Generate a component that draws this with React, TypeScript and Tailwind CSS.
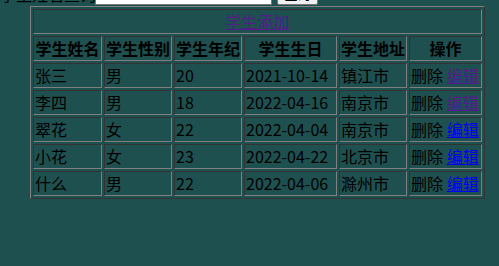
import React from "react";

interface Student {
    name: string;
    gender: string;
    age: number;
    birthday: string;
    address: string;
    visited: boolean;
}

const students: Student[] = [
    { name: "张三", gender: "男", age: 20, birthday: "2021-10-14", address: "镇江市", visited: true },
    { name: "李四", gender: "男", age: 18, birthday: "2022-04-16", address: "南京市", visited: true },
    { name: "翠花", gender: "女", age: 22, birthday: "2022-04-04", address: "南京市", visited: false },
    { name: "小花", gender: "女", age: 23, birthday: "2022-04-22", address: "北京市", visited: false },
    { name: "什么", gender: "男", age: 22, birthday: "2022-04-06", address: "滁州市", visited: false },
];

// inset cell border, like a table with border="1"
const cell =
    "border border-t-[#333] border-l-[#333] border-b-[#7f7f7f] border-r-[#7f7f7f] p-px leading-[21px] whitespace-nowrap";

export default function App() {
    return (
        <div
            className="min-h-[266px] w-full overflow-hidden bg-[#1f5050] text-black text-base"
            style={{ fontFamily: '"Noto Sans CJK SC", "Noto Sans", sans-serif' }}
        >
            <form className="flex items-center h-[22px] -mt-[17px]">
                <label className="w-[95px] leading-[21px] whitespace-nowrap">学生姓名查询：</label>
                <input
                    className="w-[177px] h-[22px] bg-white border border-[#767676] px-1"
                    type="text"
                />
                <button
                    type="button"
                    className="ml-[5px] w-[41px] h-[22px] bg-[#efefef] border border-[#767676] rounded-[2px] text-[13px] font-bold"
                >
                    查询
                </button>
            </form>

            <table className="ml-[30px] mt-px border-separate border-spacing-[2px] border border-t-[#7f7f7f] border-l-[#7f7f7f] border-b-[#333] border-r-[#333]">
                <tbody>
                    <tr>
                        <td colSpan={6} className={`${cell} text-center`}>
                            <a href="#" className="text-[#551a8b] underline">
                                学生添加
                            </a>
                        </td>
                    </tr>
                    <tr className="font-bold">
                        <th className={`${cell} w-[69px]`}>学生姓名</th>
                        <th className={`${cell} w-[68px]`}>学生性别</th>
                        <th className={`${cell} w-[68px] max-w-[68px] overflow-hidden`}>学生年纪</th>
                        <th className={`${cell} w-[93px]`}>学生生日</th>
                        <th className={`${cell} w-[68px]`}>学生地址</th>
                        <th className={`${cell} w-[73px]`}>操作</th>
                    </tr>
                    {students.map((s) => (
                        <tr key={s.name}>
                            <td className={cell}>{s.name}</td>
                            <td className={cell}>{s.gender}</td>
                            <td className={cell}>{s.age}</td>
                            <td className={cell}>{s.birthday}</td>
                            <td className={cell}>{s.address}</td>
                            <td className={cell}>
                                删除{" "}
                                <a
                                    href="#"
                                    className={`underline ${s.visited ? "text-[#551a8b]" : "text-[#0000ee]"}`}
                                >
                                    编辑
                                </a>
                            </td>
                        </tr>
                    ))}
                </tbody>
            </table>
        </div>
    );
}
